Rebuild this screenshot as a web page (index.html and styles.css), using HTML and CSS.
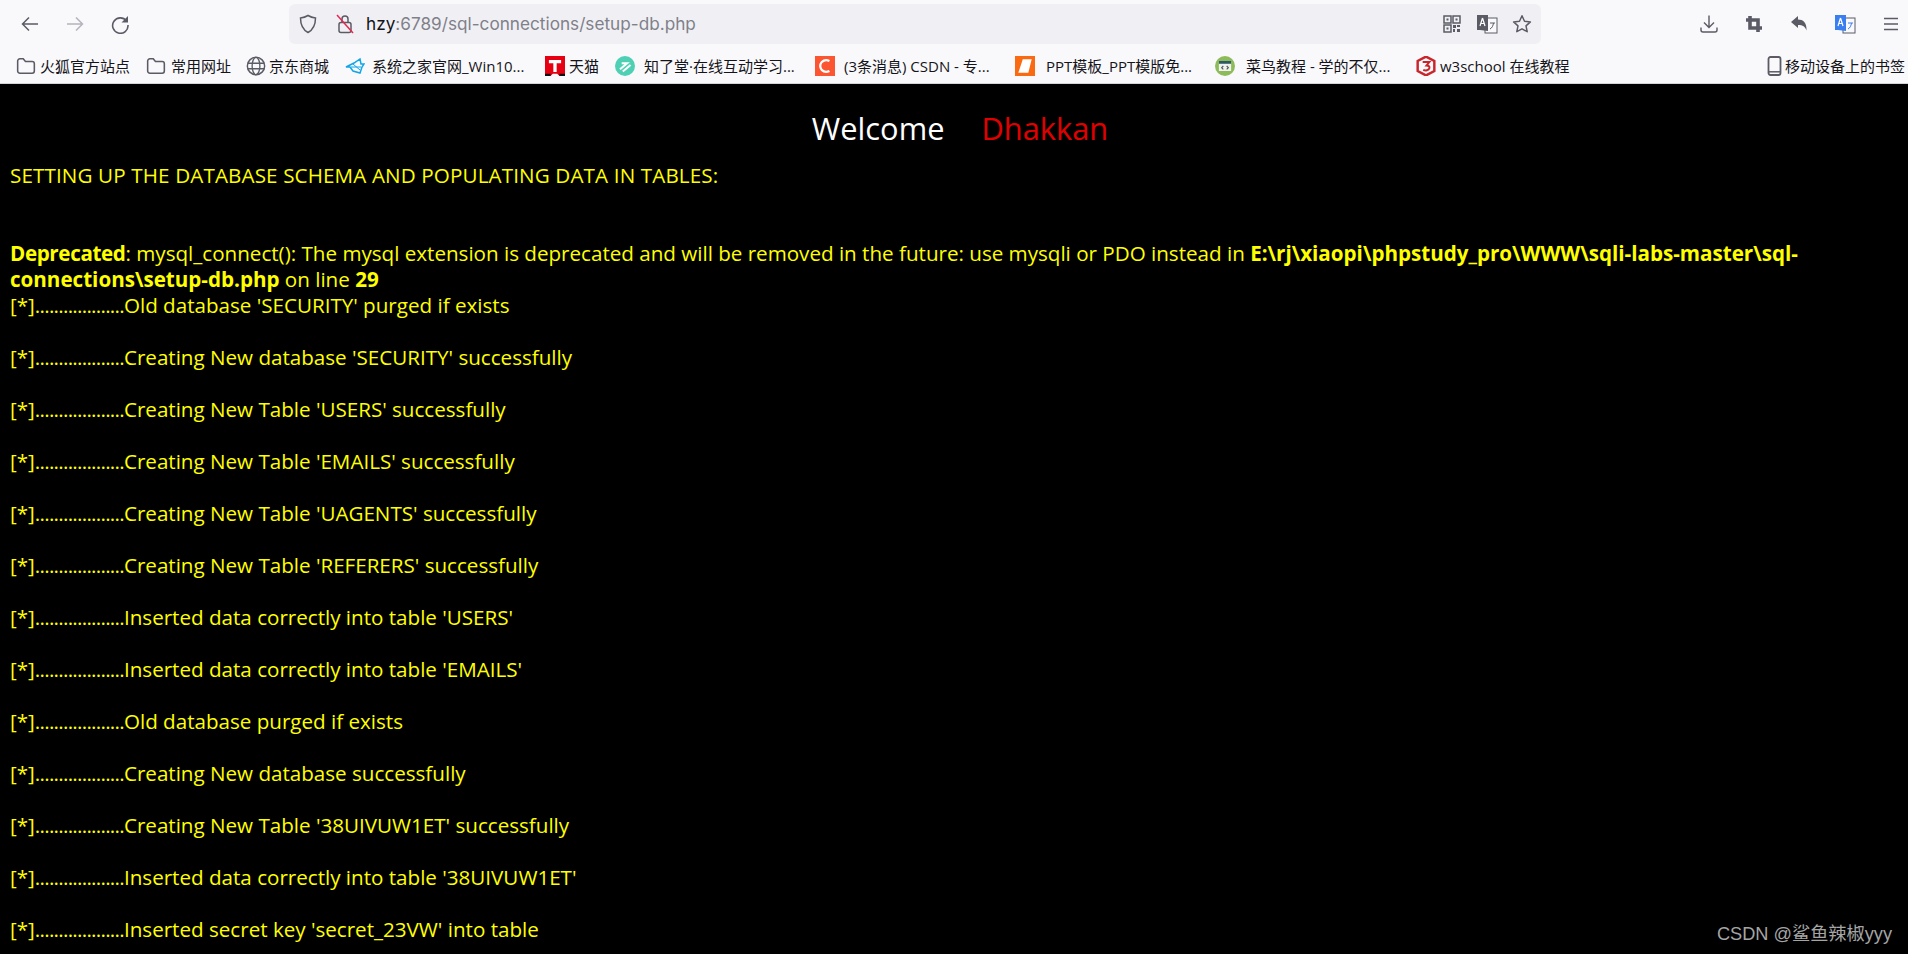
FILE: index.html
```html
<!DOCTYPE html>
<html lang="zh">
<head>
<meta charset="utf-8">
<title>setup-db</title>
<link rel="stylesheet" href="styles.css">
</head>
<body>
<header class="chrome">
  <div class="toolbar">
    <div class="nav">
      <svg class="ic" viewBox="0 0 20 20"><path d="M18 10H3M9 3.500 2.500 10 9 16.500" fill="none" stroke="#5b5b66" stroke-width="1.500"/></svg>
      <svg class="ic dim" viewBox="0 0 20 20"><path d="M2 10h15M11 3.500l6.500 6.500-6.500 6.500" fill="none" stroke="#b4b4bb" stroke-width="1.500"/></svg>
      <svg class="ic" viewBox="0 0 20 20"><path d="M16.500 7A7.700 7.700 0 1 0 18 11" fill="none" stroke="#5b5b66" stroke-width="1.600"/><path d="M18 2v6.500h-6.500z" fill="#5b5b66"/></svg>
    </div>
    <div class="urlbar">
      <svg class="ub-shield" viewBox="0 0 20 20"><path d="M10 1.500c2.500 1.600 4.500 2.200 7.500 2.400 0 7-1.800 11.300-7.500 14.600C4.300 15.200 2.500 10.900 2.500 3.900 5.500 3.700 7.500 3.100 10 1.500z" fill="none" stroke="#5b5b66" stroke-width="1.500"/></svg>
      <svg class="ub-lock" viewBox="0 0 18 20"><rect x="3" y="8.500" width="12" height="10" rx="2" fill="none" stroke="#5b5b66" stroke-width="1.500"/><path d="M6 8.500V5a3 3 0 0 1 6 0v3.500" fill="none" stroke="#5b5b66" stroke-width="1.500"/><path d="M1 1 17 19" stroke="#e22850" stroke-width="1.500"/></svg>
      <div class="url"><span class="host">hzy</span>:6789/sql-connections/setup-db.php</div>
      <div class="ub-right">
        <svg class="ic18" viewBox="0 0 18 18"><path d="M1 1h7v7H1zM10 1h7v7h-7zM1 10h7v7H1z" fill="none" stroke="#5b5b66" stroke-width="1.500"/><path d="M3.500 3.500h2v2h-2zM12.500 3.500h2v2h-2zM3.500 12.500h2v2h-2zM10 10h3v3h-3zM14 14h3v3h-3zM14 10h3v2h-3zM10 14h2v3h-2z" fill="#5b5b66"/></svg>
        <svg class="ic22" viewBox="0 0 22 20"><rect x="9" y="4" width="12" height="15" fill="#f9f9fb" stroke="#5b5b66"/><path d="M1 1h11v16l-8-1H1z" fill="#5b5b66"/><path d="M6.500 4 4 12M6.500 4 9 12M5 9.500h3" stroke="#fff" stroke-width="1.200" fill="none"/><path d="M14 9h5M17.500 9c-.5 3-1.500 5-3.500 6" stroke="#5b5b66" fill="none"/></svg>
        <svg class="ic20" viewBox="0 0 20 20"><path d="M10 1.800l2.500 5.400 5.900.7-4.400 4 1.200 5.800L10 14.800l-5.200 2.900L6 11.900l-4.400-4 5.900-.7z" fill="none" stroke="#5b5b66" stroke-width="1.500" stroke-linejoin="round"/></svg>
      </div>
    </div>
    <div class="tools">
      <svg class="ic" viewBox="0 0 20 20"><path d="M10 1.500V13M5 8.500l5 5 5-5M2 13.500V16a2 2 0 0 0 2 2h12a2 2 0 0 0 2-2v-2.500" fill="none" stroke="#5b5b66" stroke-width="1.400"/></svg>
      <svg class="ic" viewBox="0 0 20 20"><path d="M6 2v12h12M2 6h12v12" fill="none" stroke="#5b5b66" stroke-width="3.600"/></svg>
      <svg class="ic" viewBox="0 0 20 20"><path d="M2 8l7-6V5.500c5 0 9 3 8.500 11-1.500-4-3.500-5.500-8.500-5.500V14z" fill="#5b5b66"/></svg>
      <svg class="ic22" viewBox="0 0 22 20"><rect x="9" y="4" width="12" height="15" fill="#f9f9fb" stroke="#5b5b66"/><path d="M1 1h11v16l-8-1H1z" fill="#3a7ff0"/><path d="M6.500 4 4 12M6.500 4 9 12M5 9.500h3" stroke="#fff" stroke-width="1.200" fill="none"/><path d="M14 9h5M17.500 9c-.5 3-1.500 5-3.500 6" stroke="#3a7ff0" fill="none"/></svg>
      <svg class="ic menu" viewBox="0 0 20 20"><path d="M3 4.500h14M3 10h14M3 15.500h14" stroke="#5b5b66" stroke-width="1.500"/></svg>
    </div>
  </div>
  <nav class="bookmarks">
    <a class="bm w1"><svg class="bi" viewBox="0 0 18 18"><path d="M1.500 4.500a2 2 0 0 1 2-2h3l2 2.500h6a2 2 0 0 1 2 2v6.500a2 2 0 0 1-2 2h-11a2 2 0 0 1-2-2z" fill="none" stroke="#5b5b66" stroke-width="1.400"/></svg>火狐官方站点</a>
    <a class="bm w2"><svg class="bi" viewBox="0 0 18 18"><path d="M1.500 4.500a2 2 0 0 1 2-2h3l2 2.500h6a2 2 0 0 1 2 2v6.500a2 2 0 0 1-2 2h-11a2 2 0 0 1-2-2z" fill="none" stroke="#5b5b66" stroke-width="1.400"/></svg>常用网址</a>
    <a class="bm w3"><svg class="bi" viewBox="0 0 18 18"><circle cx="9" cy="9" r="7.800" fill="none" stroke="#5b5b66" stroke-width="1.300"/><ellipse cx="9" cy="9" rx="3.500" ry="7.800" fill="none" stroke="#5b5b66" stroke-width="1.200"/><path d="M1.500 6.500h15M1.500 11.500h15" stroke="#5b5b66" stroke-width="1.200"/></svg>京东商城</a>
    <a class="bm w4"><svg class="bi" viewBox="0 0 20 18"><path d="M1 10 9 6l6-4 1 5h3l-2 3-2 6-7-2-3-4z" fill="none" stroke="#12a6e8" stroke-width="1.500"/><path d="M6 10h10M8 7l7 6" stroke="#12a6e8"/></svg>系统之家官网_Win10...</a>
    <a class="bm w5"><svg class="bi" viewBox="0 0 18 18"><path d="M0 0h18v18H13l-2-2H7l-2 2H0z" fill="#e60012"/><path d="M0 16h5v2H0zM13 16h5v2h-5z" fill="#111"/><path d="M3.500 3.500h11v3H10.500v8H7.500v-8H3.500z" fill="#fff"/></svg>天猫</a>
    <a class="bm w6"><svg class="bi" viewBox="0 0 18 18"><circle cx="9" cy="9" r="9" fill="#4fd0b4"/><path d="M4.500 12 11 6.500H6M7 14l7-6" stroke="#fff" stroke-width="1.800" fill="none"/></svg>知了堂·在线互动学习...</a>
    <a class="bm w7"><svg class="bi" viewBox="0 0 18 18"><path d="M0 0h18v18H0z" fill="#fc5531"/><path d="M13 4.500A6 6 0 0 0 6 5.500c-1.500 2-1.500 5 0 7a6 6 0 0 0 7 1" fill="none" stroke="#fff" stroke-width="2"/></svg>(3条消息) CSDN - 专...</a>
    <a class="bm w8"><svg class="bi" viewBox="0 0 18 18"><path d="M0 0h18v18H0z" fill="#f96a12"/><path d="M7 3h8l-3 12H3z" fill="#fff"/></svg>PPT模板_PPT模版免...</a>
    <a class="bm w9"><svg class="bi" viewBox="0 0 18 18"><circle cx="9" cy="9" r="9" fill="#8dbb5a"/><path d="M3.500 5h11v8.500h-11z" fill="#eef3ee"/><path d="M3.500 4.500h11v2.500h-11z" fill="#2e5a63"/><path d="M7.500 9l-1.500 1.500 1.500 1.500M10.500 9l1.500 1.500-1.500 1.500" stroke="#555" fill="none"/></svg>菜鸟教程 - 学的不仅...</a>
    <a class="bm w10"><svg class="bi" viewBox="0 0 18 18"><path d="M9 .5 16.500 4.500v9L9 17.500 1.500 13.500v-9z" fill="none" stroke="#c8252c" stroke-width="2.200"/><path d="M6 5.500h6L9.500 8.500c2 0 3 1 2.500 2.500-.5 2-3.500 2.500-5.500 1.500" fill="none" stroke="#c8252c" stroke-width="1.800"/></svg>w3school 在线教程</a>
    <a class="bm mobile"><svg class="phone" viewBox="0 0 14 20"><rect x="1" y="1" width="12" height="18" rx="2" fill="none" stroke="#5b5b66" stroke-width="1.800"/><path d="M1 15.800h12" stroke="#5b5b66" stroke-width="1.500"/></svg>移动设备上的书签</a>
  </nav>
</header>
<main class="page">
  <div class="welcome"><span class="w-white">Welcome</span><span class="w-red">Dhakkan</span></div>
  <div class="schema">SETTING UP THE DATABASE SCHEMA AND POPULATING DATA IN TABLES:</div>
  <div class="deprecated"><b class="label">Deprecated</b>: mysql_connect(): The mysql extension is deprecated and will be removed in the future: use mysqli or PDO instead in <b>E:\rj\xiaopi\phpstudy_pro\WWW\sqli-labs-master\sql-connections\setup-db.php</b> on line <b>29</b></div>
  <div class="log">[*]<span class="dots">...................</span>Old database 'SECURITY' purged if exists</div>
  <div class="log">[*]<span class="dots">...................</span>Creating New database 'SECURITY' successfully</div>
  <div class="log">[*]<span class="dots">...................</span>Creating New Table 'USERS' successfully</div>
  <div class="log">[*]<span class="dots">...................</span>Creating New Table 'EMAILS' successfully</div>
  <div class="log">[*]<span class="dots">...................</span>Creating New Table 'UAGENTS' successfully</div>
  <div class="log">[*]<span class="dots">...................</span>Creating New Table 'REFERERS' successfully</div>
  <div class="log">[*]<span class="dots">...................</span>Inserted data correctly into table 'USERS'</div>
  <div class="log">[*]<span class="dots">...................</span>Inserted data correctly into table 'EMAILS'</div>
  <div class="log">[*]<span class="dots">...................</span>Old database purged if exists</div>
  <div class="log">[*]<span class="dots">...................</span>Creating New database successfully</div>
  <div class="log">[*]<span class="dots">...................</span>Creating New Table '38UIVUW1ET' successfully</div>
  <div class="log">[*]<span class="dots">...................</span>Inserted data correctly into table '38UIVUW1ET'</div>
  <div class="log">[*]<span class="dots">...................</span>Inserted secret key 'secret_23VW' into table</div>
</main>
<div class="mark">CSDN @鲨鱼辣椒yyy</div>
</body>
</html>
```
FILE: styles.css
```css
* { box-sizing: border-box; }
html, body { margin: 0; height: 100%; overflow: hidden; background: #000; }
body { width: 1908px; height: 954px; position: relative; font-family: "Open Sans", "Noto Sans CJK SC", sans-serif; }

.chrome { background: #f9f9fb; height: 84px; border-bottom: 1px solid #d4d4d8; display: flex; flex-direction: column; }
.toolbar { height: 48px; display: flex; align-items: center; padding-left: 20px; }
.nav { display: flex; align-items: center; gap: 25px; width: 269px; }
.ic { width: 20px; height: 20px; flex: none; }
.ic18 { width: 18px; height: 18px; flex: none; }
.ic20 { width: 20px; height: 20px; flex: none; }
.ic22 { width: 22px; height: 20px; flex: none; }
.urlbar { width: 1252px; height: 40px; background: #f0f0f4; border-radius: 6px; display: flex; align-items: center; padding: 0 9px; }
.ub-shield { width: 20px; height: 20px; flex: none; margin-right: 18px; }
.ub-lock { width: 18px; height: 20px; flex: none; margin-right: 12px; }
.url { flex: 1; font: 17.200px/24px "Inter", "Open Sans", sans-serif; color: #80808a; white-space: nowrap; }
.host { color: #15141a; }
.ub-right { display: flex; align-items: center; gap: 14.500px; }
.tools { display: flex; align-items: center; gap: 25px; margin-left: 158px; }

.bookmarks { height: 35px; display: flex; align-items: center; padding-left: 16px; }
.bm { display: flex; align-items: center; font: 15px/20px "Open Sans", "Noto Sans CJK SC", sans-serif; color: #15141a; white-space: nowrap; flex: none; }
.bi { width: 20px; height: 20px; flex: none; }
.w1 { width: 130px; gap: 4px; }
.w2 { width: 100px; gap: 5px; }
.w3 { width: 99px; gap: 3px; }
.w4 { width: 200px; gap: 7px; }
.w5 { width: 70px; gap: 4px; }
.w6 { width: 200px; gap: 9px; }
.w7 { width: 200px; gap: 9px; }
.w8 { width: 200px; gap: 11px; }
.w9 { width: 201px; gap: 11px; }
.w10 { width: 200px; gap: 4px; }
.mobile { margin-left: auto; margin-right: 3px; gap: 3px; }
.phone { width: 15px; height: 20px; flex: none; }

.page { padding: 0 10px; color: #ff0; font-size: 20.600px; line-height: 26px; }
.welcome { height: 78px; padding: 10px 0 0 12px; display: flex; justify-content: center; align-items: center; gap: 37px; font-size: 30.800px; line-height: 40px; }
.w-white { color: #fff; }
.w-red { color: #e00000; }
.schema { height: 26px; margin-bottom: 52px; letter-spacing: 0.140px; }
.log { height: 52px; }
.label { letter-spacing: -0.360px; }
.dots { letter-spacing: -0.720px; }
.mark { position: absolute; right: 16px; bottom: 8px; color: #a5a5a5; font: 18.200px/24px "Liberation Sans", "Noto Sans CJK SC", sans-serif; }
```
